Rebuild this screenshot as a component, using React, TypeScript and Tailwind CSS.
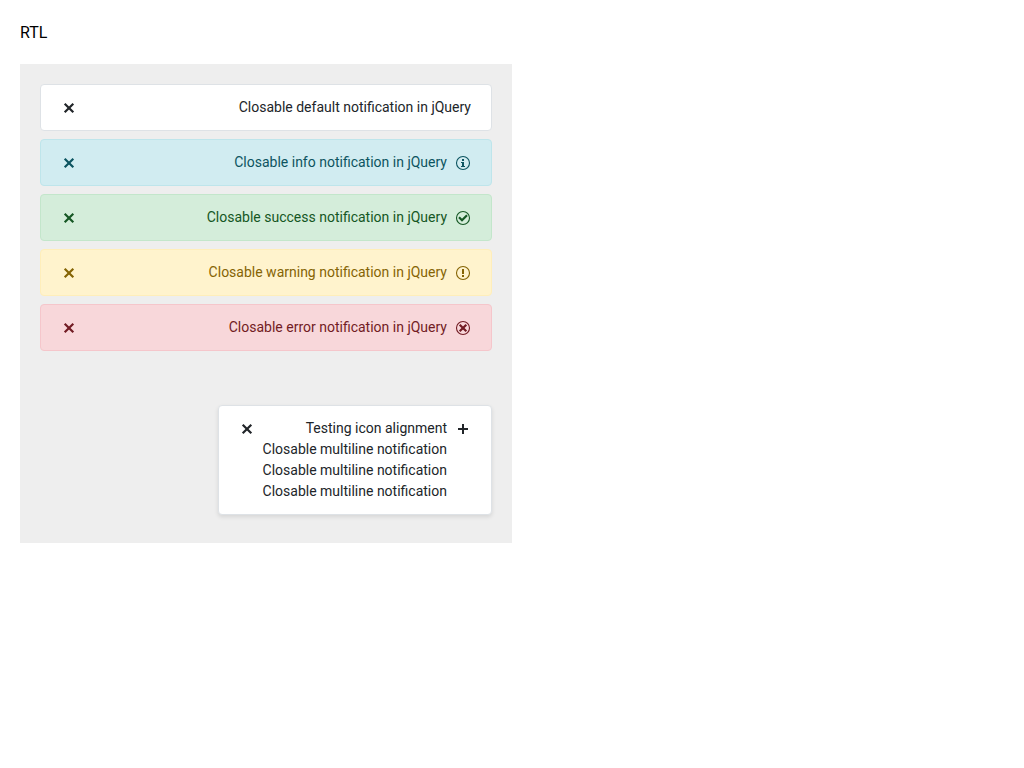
import type { ReactNode } from "react";

type Kind = "default" | "info" | "success" | "warning" | "error";

const styles: Record<Kind, string> = {
  default: "bg-white border-[#dee2e6] text-[#212529]",
  info: "bg-[#d1ecf1] border-[#bee5eb] text-[#0c5460]",
  success: "bg-[#d4edda] border-[#c3e6cb] text-[#155724]",
  warning: "bg-[#fff3cd] border-[#ffeeba] text-[#856404]",
  error: "bg-[#f8d7da] border-[#f5c6cb] text-[#721c24]",
};

function Icon({ children }: { children: ReactNode }) {
  return (
    <svg viewBox="0 0 16 16" className="size-4 shrink-0" fill="none" stroke="currentColor" aria-hidden="true">
      {children}
    </svg>
  );
}

const ring = <circle cx="8" cy="8" r="6.5" strokeWidth="1.1" />;

const icons = {
  info: (
    <Icon>
      {ring}
      <path d="M7 4h2v2H7zM6 7h3v4h1v1H6v-1h1V8H6z" fill="currentColor" stroke="none" />
    </Icon>
  ),
  success: (
    <Icon>
      {ring}
      <path d="M4 7.2 7 10.2 12 5.2" strokeWidth="2.2" />
    </Icon>
  ),
  warning: (
    <Icon>
      {ring}
      <path d="M7 4h2v5H7zM7 10h2v2H7z" fill="currentColor" stroke="none" />
    </Icon>
  ),
  error: (
    <Icon>
      {ring}
      <path d="M4.7 4.7l6.6 6.6M11.3 4.7l-6.6 6.6" strokeWidth="2.2" />
    </Icon>
  ),
  plus: (
    <Icon>
      <path d="M8 3v10M3 8h10" strokeWidth="2" />
    </Icon>
  ),
};

function Notification({
  kind = "default",
  icon,
  raised = false,
  children,
}: {
  kind?: Kind;
  icon?: ReactNode;
  raised?: boolean;
  children: ReactNode;
}) {
  return (
    <div
      role="alert"
      className={`flex items-start gap-2 rounded border px-5 py-3 ${styles[kind]} ${
        raised ? "shadow-[0_2px_4px_rgba(0,0,0,0.1)]" : ""
      }`}
    >
      {icon && <span className="pt-[3px]">{icon}</span>}
      <div className="grow">{children}</div>
      <button type="button" aria-label="Close" className="cursor-pointer pt-[3px]">
        <Icon>
          <path d="M3.7 3.7l8.6 8.6M12.3 3.7l-8.6 8.6" strokeWidth="2.2" />
        </Icon>
      </button>
    </div>
  );
}

export default function App() {
  return (
    <main className="w-1/2 pt-5 pl-5 font-[Roboto,sans-serif] text-black">
      <h1 className="text-base leading-[25px]">RTL</h1>
      <section dir="rtl" className="mt-[19px] bg-[#eeeeee] px-5 pt-5 pb-7 text-sm leading-[21px]">
        <div className="flex flex-col gap-2">
          <Notification>Closable default notification in jQuery</Notification>
          <Notification kind="info" icon={icons.info}>Closable info notification in jQuery</Notification>
          <Notification kind="success" icon={icons.success}>Closable success notification in jQuery</Notification>
          <Notification kind="warning" icon={icons.warning}>Closable warning notification in jQuery</Notification>
          <Notification kind="error" icon={icons.error}>Closable error notification in jQuery</Notification>
        </div>
        <div className="mt-[54px] flex">
          <Notification icon={icons.plus} raised>
            <p>Testing icon alignment</p>
            <p>Closable multiline notification</p>
            <p>Closable multiline notification</p>
            <p>Closable multiline notification</p>
          </Notification>
        </div>
      </section>
    </main>
  );
}
